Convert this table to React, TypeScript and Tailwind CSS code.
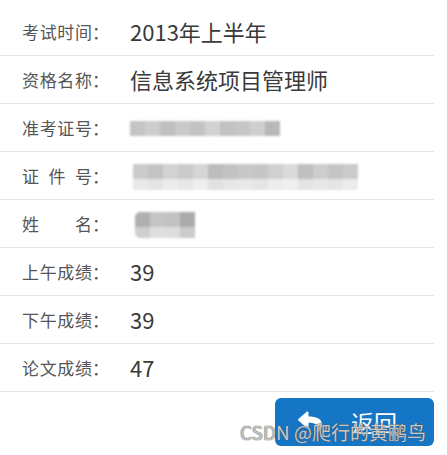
import { FaReply } from "react-icons/fa";

const font = { fontFamily: '"Noto Sans CJK SC", "Noto Sans", sans-serif' };

function Mosaic({ rows, cell, className }: { rows: string[][]; cell: number; className?: string }) {
  return (
    <div className={"flex flex-col blur-[0.8px] " + (className ?? "")}>
      {rows.map((r, i) => (
        <div key={i} className="flex">
          {r.map((c, j) => (
            <div key={j} style={{ width: cell, height: i === 0 ? cell : cell * 0.7, background: c }} />
          ))}
        </div>
      ))}
    </div>
  );
}

function Label({ chars }: { chars: string[] }) {
  return (
    <div className="flex w-[108px] shrink-0 items-center text-[17px] text-[#555]">
      <div className="flex w-[70px] justify-between">
        {chars.map((c, i) => (
          <span key={i}>{c}</span>
        ))}
      </div>
      <span>：</span>
    </div>
  );
}

function Row({ chars, children }: { chars: string[]; children: React.ReactNode }) {
  return (
    <div className="flex h-[48px] items-center border-b border-[#e4e4e4] pl-[22px]">
      <Label chars={chars} />
      <div className="text-[22px] text-[#3a3a3a]">{children}</div>
    </div>
  );
}

export default function App() {
  return (
    <div className="relative h-[455px] w-[447px] overflow-hidden bg-white pt-[8px]" style={font}>
      <div className="w-[434px]">
        <Row chars={["考", "试", "时", "间"]}>2013年上半年</Row>
        <Row chars={["资", "格", "名", "称"]}>信息系统项目管理师</Row>
        <Row chars={["准", "考", "证", "号"]}>
          <Mosaic
            cell={15}
            className="mt-[2px]"
            rows={[["#c4c4c4", "#cdcdcd", "#bfbfbf", "#cacaca", "#c3c3c3", "#d2d2d2", "#c2c2c2", "#c6c6c6", "#cfcfcf", "#b8b8b8"]]}
          />
        </Row>
        <Row chars={["证", "件", "号"]}>
          <Mosaic
            cell={15}
            className="ml-[3px] mt-[3px]"
            rows={[
              ["#cbcbcb", "#c3c3c3", "#d2d2d2", "#cacaca", "#d6d6d6", "#bdbdbd", "#c2c2c2", "#c8c8c8", "#c6c6c6", "#d0d0d0", "#dadada", "#bfbfbf", "#cdcdcd", "#c4c4c4", "#cbcbcb"],
              ["#e8e8e8", "#e4e4e4", "#ececec", "#e7e7e7", "#eeeeee", "#e2e2e2", "#e6e6e6", "#e8e8e8", "#e5e5e5", "#ececec", "#efefef", "#e3e3e3", "#e7e7e7", "#e5e5e5", "#ebebeb"],
            ]}
          />
        </Row>
        <Row chars={["姓", "名"]}>
          <Mosaic
            cell={15}
            className="ml-[5px] mt-[3px] overflow-hidden rounded-l-[5px]"
            rows={[
              ["#b0b0b0", "#c5c5c5", "#c2c2c2", "#ababab"],
              ["#cfcfcf", "#dfdfdf", "#dddddd", "#cbcbcb"],
            ]}
          />
        </Row>
        <Row chars={["上", "午", "成", "绩"]}>39</Row>
        <Row chars={["下", "午", "成", "绩"]}>39</Row>
        <Row chars={["论", "文", "成", "绩"]}>47</Row>
        <div className="mt-[6px] flex justify-end">
          <button className="flex h-[48px] w-[159px] items-center rounded-[6px] bg-[#1576c6] pl-[22px] text-white">
            <FaReply className="h-[24px] w-[26px]" />
            <span className="ml-[28px] text-[23px] leading-none">返回</span>
          </button>
        </div>
      </div>
      <div
        className="absolute left-[240px] top-[422px] text-[19px] leading-none text-[rgba(215,215,215,0.9)]"
        style={{ textShadow: "0 0 1px #555, 0 0 1px #555" }}
      >
        CSDN @爬行的黄鹂鸟
      </div>
    </div>
  );
}
